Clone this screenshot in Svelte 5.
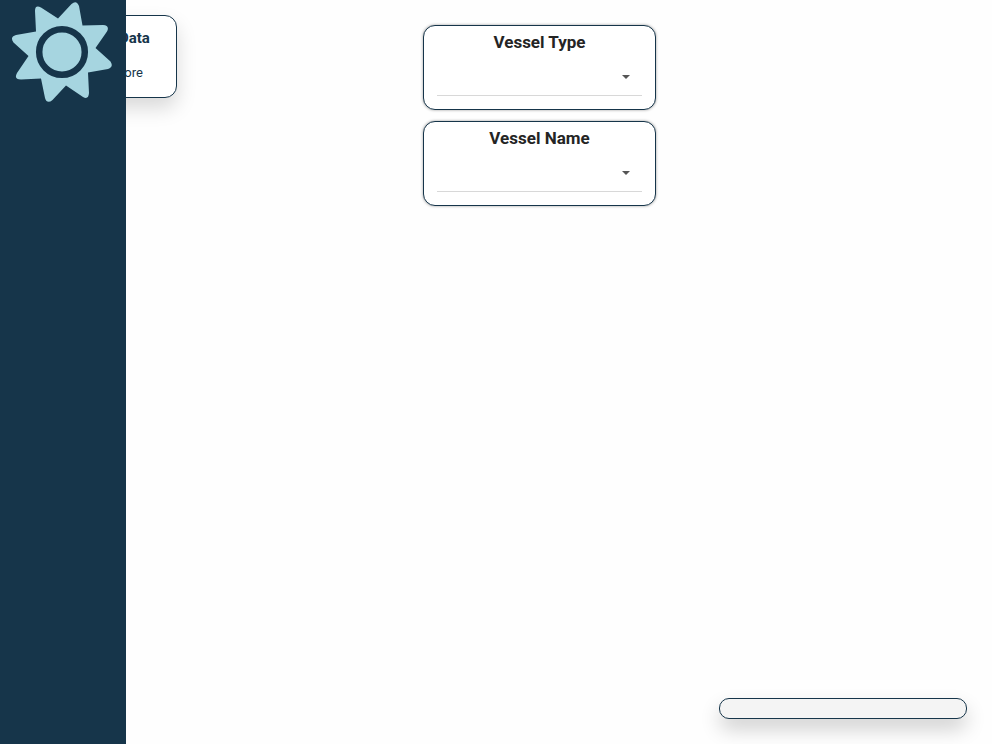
<script>
  const filters = [
    { id: 'vessel-type', label: 'Vessel Type' },
    { id: 'vessel-name', label: 'Vessel Name' }
  ];
</script>

<div class="page">
  <aside class="sidebar">
    <svg class="logo" viewBox="0 0 126 106" aria-hidden="true">
      <path
        d="M36 31.500 L35 11 Q35 4.500 41 7.500 L58 18.500 L71.500 4 Q76.500 -.5 79 6 L82.500 25.500 L103 25 Q110 25.500 107 31.500 L95.500 48 L110.500 61.500 Q114 67 108 69 L88 72.500 L89 93 Q88.500 100 83 97 L66 85.500 L52.500 100 Q47 104.500 45 98 L41 78.500 L21 79.500 Q13.500 79.500 17 73 L28.500 56 L13.500 42.500 Q9.500 37 16 35 Z"
        fill="#a6d5e0"
      />
      <circle cx="62" cy="52" r="22.800" fill="#a6d5e0" stroke="#16354a" stroke-width="6.500" />
    </svg>
  </aside>

  <main>
    <header>
      <section class="info">
        <h2>Vessel Data</h2>
        <p>Learn more</p>
      </section>
      <div class="filters">
        {#each filters as filter (filter.id)}
          <div class="filter">
            <label for={filter.id}>{filter.label}</label>
            <div class="field">
              <select id={filter.id}><option value=""></option></select>
              <svg viewBox="0 0 8 4" aria-hidden="true"><path d="M0 0H8L4 4Z" fill="#555" /></svg>
            </div>
          </div>
        {/each}
      </div>
    </header>
    <footer><div class="legend"></div></footer>
  </main>
</div>

<style>
  :global(body) {
    background: #fefefe;
  }
  .page {
    position: relative;
    min-height: 100vh;
    font-family: Roboto, "Liberation Sans", sans-serif;
    color: #16354a;
  }
  .page, .page * {
    box-sizing: border-box;
  }
  .sidebar {
    position: absolute;
    z-index: 1;
    top: 0;
    bottom: 0;
    left: 0;
    width: 126px;
    background: #16354a;
  }
  .logo {
    display: block;
    width: 100%;
  }
  main {
    display: flex;
    flex-direction: column;
    justify-content: space-between;
    min-height: 100vh;
  }
  header {
    display: flex;
    align-items: flex-start;
    padding: 15px 90px 0 43px;
  }
  .info {
    width: 134px;
    padding: 12px 0 15px;
    border: 1px solid #16354a;
    border-radius: 12px;
    background: #fff;
    text-align: center;
    box-shadow: 0 10px 20px rgba(0, 0, 0, 0.15);
  }
  h2 {
    margin: 0 0 15px;
    font-size: 15px;
    line-height: 20px;
    font-weight: 700;
  }
  p {
    margin: 0;
    font-size: 13px;
    line-height: 19px;
  }
  .filters {
    flex: 1;
    display: flex;
    flex-direction: column;
    align-items: center;
    gap: 11px;
    padding-top: 10px;
  }
  .filter {
    width: 233px;
    padding: 6px 13px 13px;
    border: 1px solid #16354a;
    border-radius: 12px;
    background: #fff;
    box-shadow: 0 0 3px rgba(0, 0, 0, 0.4);
  }
  label {
    display: block;
    color: #242424;
    font-size: 17px;
    line-height: 20px;
    font-weight: 700;
    text-align: center;
  }
  .field {
    position: relative;
    margin-top: 12px;
  }
  select {
    display: block;
    width: 100%;
    height: 32px;
    padding: 0 24px 0 0;
    border: 0;
    border-bottom: 1px solid #d8d8d8;
    border-radius: 0;
    background: transparent;
    appearance: none;
    font: inherit;
    font-size: 16px;
  }
  .field svg {
    position: absolute;
    top: 11px;
    right: 12px;
    width: 8px;
    height: 4px;
    pointer-events: none;
  }
  footer {
    display: flex;
    justify-content: flex-end;
    padding: 25px;
  }
  .legend {
    width: 248px;
    height: 21px;
    border: 1px solid #16354a;
    border-radius: 10px;
    background: #f4f4f4;
    box-shadow: 0 10px 20px rgba(0, 0, 0, 0.19);
  }
</style>
